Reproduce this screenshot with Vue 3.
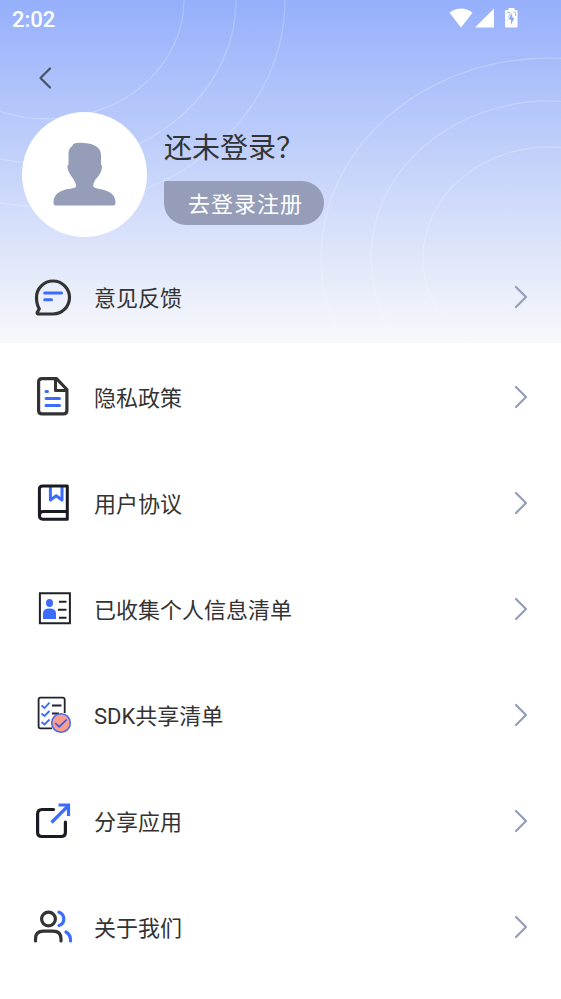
<script setup>
const items = [
  { icon: 'privacy', label: '隐私政策' },
  { icon: 'book', label: '用户协议' },
  { icon: 'card', label: '已收集个人信息清单' },
  { icon: 'sdk', label: 'SDK共享清单' },
  { icon: 'share', label: '分享应用' },
  { icon: 'about', label: '关于我们' },
]
</script>

<template>
  <main class="page">
    <header class="hero">
      <svg class="rings" width="561" height="343" viewBox="0 0 561 343" aria-hidden="true">
        <g fill="none" stroke="#fff" stroke-opacity=".22" stroke-width="1.3">
          <ellipse cx="48" cy="0" rx="136" ry="119" />
          <ellipse cx="48" cy="0" rx="188" ry="164" />
          <ellipse cx="48" cy="0" rx="237" ry="207" />
          <ellipse cx="549" cy="258" rx="126" ry="111" />
          <ellipse cx="549" cy="258" rx="178" ry="157" />
          <ellipse cx="549" cy="258" rx="228" ry="200" />
        </g>
      </svg>

      <div class="status">
        <span>2:02</span>
        <svg width="72" height="24" viewBox="0 0 72 24" aria-hidden="true">
          <path d="M0.5 6.8Q12 -1.6 23.5 6.8L12 21.5Z" fill="#fff" />
          <path d="M45 2.500V21.500H26Z" fill="#fff" />
          <path d="M59.500 2H65.500V4H67.200Q68.500 4 68.500 5.300V20Q68.500 21.500 67.200 21.500H57.300Q56 21.500 56 20V5.300Q56 4 57.300 4H59.500Z" fill="#fff" />
          <path d="M63.500 6.500L59.300 13.500H62V18.500L65.500 11.700H63.200V6.500Z" fill="#8fa9ee" />
          <path d="M58 6.500H61V9L59 11M64 6H66.500V10" fill="none" stroke="#a9bdfb" stroke-width="1" />
        </svg>
      </div>

      <nav class="nav">
        <button class="back" type="button" aria-label="返回">
          <svg width="14" height="24" viewBox="0 0 14 24" aria-hidden="true">
            <path d="M12 2.500L2.500 12L12 21.500" fill="none" stroke="#4a5266" stroke-width="2.200" stroke-linecap="round" stroke-linejoin="round" />
          </svg>
        </button>
      </nav>

      <section class="profile">
        <div class="avatar">
          <svg width="64" height="64" viewBox="0 0 64 64" aria-hidden="true">
            <path d="M19.500 3.800C20 1.500 23 .8 27 .8C39 .8 48 4.500 48 13V22.500C49.500 23 49 25 48.700 27C48.200 31 45 34.500 42.500 37.500C40.500 40.500 40 43.500 40.500 45C43 47 47 46.500 51 48C59 50.500 62.500 54 62.500 61Q62.500 63.500 60.500 63.500H2.500Q.5 63.500 .5 61C.5 54 4 50.500 11 48C15 46.500 20 47 23 45C23.500 42.500 22 39.500 20 36.500C17.500 33 15 29.500 14.700 26.500C14.400 24.500 14.200 23 15.500 22.500V12C15.500 8 17 5.500 19.500 3.800Z" fill="#959db9" />
          </svg>
        </div>
        <div class="account">
          <h1>还未登录？</h1>
          <button class="login" type="button">去登录注册</button>
        </div>
      </section>

      <a class="row feedback" href="#feedback">
        <svg class="icon" width="40" height="40" viewBox="0 0 40 40" aria-hidden="true">
          <path d="M20 37H5Q3.500 36.300 4.500 35L6.300 31.800Q3.500 27.500 3.500 20.500A16.500 16.500 0 1 1 20 37Z" fill="none" stroke="#333" stroke-width="3.200" stroke-linejoin="round" />
          <path d="M11.700 16H28.500M11.700 22.800H18.500" stroke="#3c6cfe" stroke-width="3" stroke-linecap="round" />
        </svg>
        <span class="label">意见反馈</span>
        <svg class="arrow" width="14" height="24" viewBox="0 0 14 24" aria-hidden="true">
          <path d="M2 2L12 12L2 22" />
        </svg>
      </a>
    </header>

    <nav class="menu">
      <a v-for="item in items" :key="item.icon" class="row" :href="'#' + item.icon">
        <svg class="icon" width="40" height="40" viewBox="0 0 40 40" aria-hidden="true">
          <g v-if="item.icon === 'privacy'" fill="none" stroke-linejoin="round">
            <path d="M23.500 1.600H9Q5.600 1.600 5.600 5V33.500Q5.600 36.900 9 36.900H30.500Q33.900 36.900 33.900 33.500V12.500L23.500 1.600Z" stroke="#333" stroke-width="3.200" />
            <path d="M22.500 2V13.500H33.500" stroke="#333" stroke-width="3" />
            <path d="M13 14.500H14.500M13 21.500H26.500M13 28.500H26.500" stroke="#3c6cfe" stroke-width="3" stroke-linecap="round" />
          </g>
          <g v-else-if="item.icon === 'book'" fill="none" stroke-linejoin="round">
            <path d="M17.400 4V17L23.200 12.800L29 17V4" stroke="#3c6cfe" stroke-width="3" />
            <path d="M6.400 33V6Q6.400 2.900 9.800 2.900H34.300V36.300H9.800Q6.400 36.300 6.400 32.500Q6.400 28.500 10 28.500H34" stroke="#1a1a24" stroke-width="3" />
          </g>
          <g v-else-if="item.icon === 'card'">
            <path d="M6.900 4.200H36.900V34.200H6.900Z" fill="none" stroke="#20202c" stroke-width="2" />
            <ellipse cx="16.500" cy="14" rx="3.500" ry="3.900" fill="#3c6cfe" />
            <path d="M10 30V24.500Q10 19.500 16.500 19.500T23 24.500V30Z" fill="#3c6cfe" />
            <path d="M26 12.700H33.500M25 20.700H33.500M26 28.700H33.500" stroke="#20202c" stroke-width="2" />
          </g>
          <g v-else-if="item.icon === 'sdk'" fill="none">
            <path d="M31.700 18V4.500Q31.700 2.600 29.800 2.600H7.500Q5.600 2.600 5.600 4.500V31.500Q5.600 33.400 7.500 33.400H19" stroke="#20242c" stroke-width="1.800" />
            <path d="M19 10.500H28.500M19 18.500H26" stroke="#20242c" stroke-width="2" />
            <path d="M8.500 10.500L11.500 13L16.500 7.700M8.500 18.500L11.500 21L16.500 16M8.500 27L11.500 29.500L16.500 24.500" stroke="#3c6cfe" stroke-width="1.800" />
            <circle cx="28" cy="28" r="9.300" fill="#fb9d8c" stroke="#4c6be9" stroke-width="1.600" />
            <path d="M22.200 28L26.200 31.800L33.700 24.500" stroke="#3156e0" stroke-width="1.700" />
          </g>
          <g v-else-if="item.icon === 'share'" fill="none" stroke-width="3.200" stroke-linecap="round">
            <path d="M20.500 8.500H9Q4.600 8.500 4.600 13V31.500Q4.600 35.500 9 35.500H28Q32.400 35.500 32.400 31.500V21" stroke="#1a1a24" />
            <path d="M18.500 21.500L35.500 4.500M25.500 4H35.500V15" stroke="#3c6cfe" stroke-linecap="butt" />
          </g>
          <g v-else fill="none" stroke-width="3.200" stroke-linecap="round">
            <ellipse cx="15.500" cy="12" rx="6.900" ry="6.900" stroke="#333" />
            <path d="M2.500 34V32Q2.500 24.200 10.500 24.200H20Q28 24.200 28 32V34" stroke="#333" />
            <path d="M26 5.200Q30.800 7 30.800 12T26 18.500M33 25Q37.600 27.500 37.600 34" stroke="#3c6cfe" />
          </g>
        </svg>
        <span class="label">{{ item.label }}</span>
        <svg class="arrow" width="14" height="24" viewBox="0 0 14 24" aria-hidden="true">
          <path d="M2 2L12 12L2 22" />
        </svg>
      </a>
    </nav>
  </main>
</template>

<style>
body {
  margin: 0;
  background: #fff;
}
</style>

<style scoped>
.page {
  font-family: Roboto, "Noto Sans CJK SC", sans-serif;
  color: #333;
}

.hero {
  position: relative;
  overflow: hidden;
  background: linear-gradient(#95affb, #f8f9fa);
}

.rings {
  position: absolute;
  top: 0;
  left: 0;
}

.status,
.nav,
.profile,
.feedback {
  position: relative;
}

.status {
  display: flex;
  align-items: center;
  justify-content: space-between;
  height: 38px;
  padding: 0 40px 0 12px;
  color: #fff;
  font-size: 22px;
  font-weight: 500;
}

.status svg {
  margin-bottom: 2px;
}

.nav {
  display: flex;
  align-items: center;
  height: 73px;
  padding: 0 26px;
}

.back {
  display: flex;
  padding: 12px;
  margin-bottom: -6px;
  border: 0;
  background: none;
}

.profile {
  display: flex;
  align-items: center;
  gap: 17px;
  height: 126px;
  padding: 0 22px;
}

.avatar {
  display: flex;
  align-items: center;
  justify-content: center;
  width: 125px;
  height: 125px;
  border-radius: 50%;
  background: #fff;
}

.account {
  display: flex;
  flex-direction: column;
  align-items: flex-start;
  gap: 12px;
}

h1 {
  margin: 0;
  padding-top: 6px;
  font-size: 28px;
  font-weight: 400;
  line-height: 40px;
}

.login {
  height: 44px;
  padding: 0 21px 2px 24px;
  border: 0;
  border-radius: 2px 22px 22px 22px;
  background: #959db9;
  color: #fff;
  font-family: inherit;
  font-size: 22px;
  letter-spacing: 1px;
}

.row {
  display: flex;
  align-items: center;
  height: 106px;
  padding: 0 33px;
  color: #333;
  text-decoration: none;
}

.feedback {
  height: 92px;
  margin-top: 14px;
}

.menu {
  padding-top: 1px;
}

.label {
  flex: 1;
  margin-left: 21px;
  padding-top: 3px;
  font-size: 22px;
  line-height: 32px;
}

.arrow path {
  fill: none;
  stroke: #959db9;
  stroke-width: 2.2px;
  stroke-linecap: round;
  stroke-linejoin: round;
}
</style>
